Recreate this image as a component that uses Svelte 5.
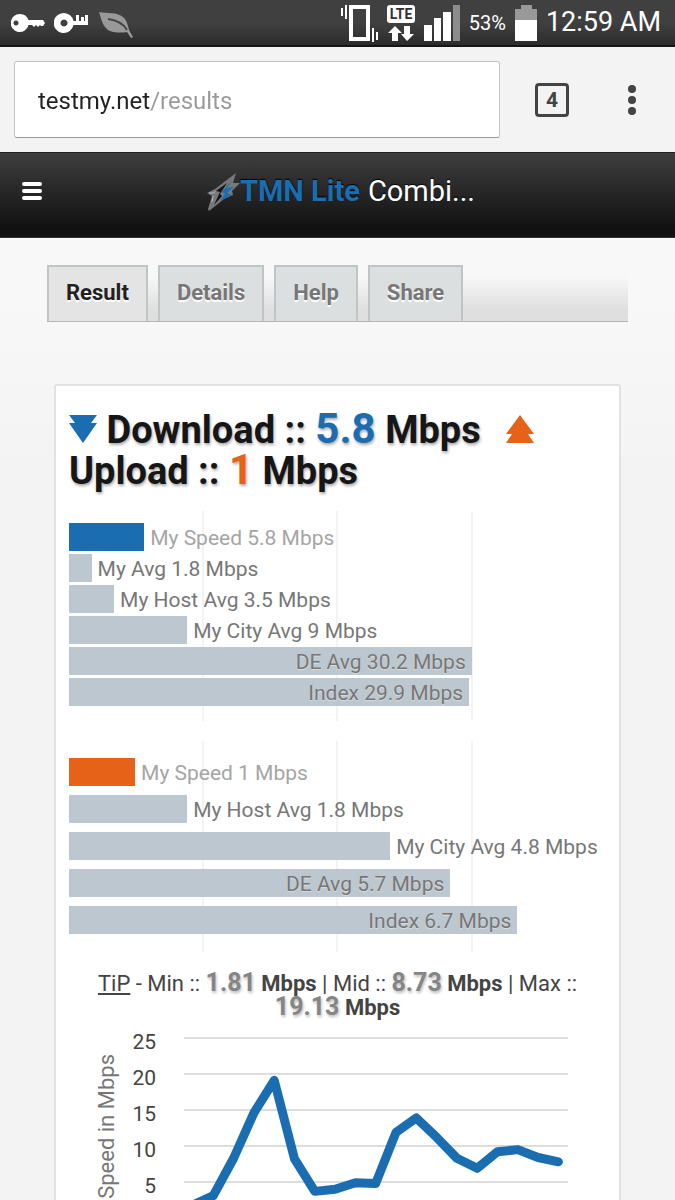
<script>
	const tabs = ["Result", "Details", "Help", "Share"];
	let activeTab = "Result";
	let url = "testmy.net/results";

	// widths are percentages of the chart area
	const download = [
		{ label: "My Speed 5.8 Mbps", width: 14, mine: true },
		{ label: "My Avg 1.8 Mbps", width: 4.2 },
		{ label: "My Host Avg 3.5 Mbps", width: 8.4 },
		{ label: "My City Avg 9 Mbps", width: 22 },
		{ label: "DE Avg 30.2 Mbps", width: 75, inside: true },
		{ label: "Index 29.9 Mbps", width: 74.5, inside: true }
	];
	const upload = [
		{ label: "My Speed 1 Mbps", width: 12.3, mine: true },
		{ label: "My Host Avg 1.8 Mbps", width: 22 },
		{ label: "My City Avg 4.8 Mbps", width: 59.8 },
		{ label: "DE Avg 5.7 Mbps", width: 71, inside: true },
		{ label: "Index 6.7 Mbps", width: 83.5, inside: true }
	];
	const charts = [
		{ name: "download", rows: download },
		{ name: "upload", rows: upload }
	];

	const samples = [
		1.81, 3.1, 8.3, 14.6, 19.13, 8.2, 3.7, 4, 4.9, 4.8, 11.9, 13.9, 11.2, 8.3, 6.9, 9.2, 9.5, 8.4,
		7.8
	];
	const ticks = [25, 20, 15, 10, 5, 0];

	function yPos(value) {
		return 194 - value * 7.2;
	}
	const points = samples.map((v, i) => `${124 + i * 20.3},${yPos(v)}`).join(" ");
</script>

<div class="screen">
	<div class="status">
		<svg width="34" height="20" viewBox="0 0 34 20">
			<path
				fill="#fff"
				fill-rule="evenodd"
				d="M9 1a9 9 0 0 1 8.500 6H32l2 3-2 3h-2l-1-1-2 2-2-2-2 2-2-2h-3.500A9 9 0 1 1 9 1zM5 7.500a2.500 2.500 0 1 0 .01 0z"
			/>
		</svg>
		<svg width="34" height="22" viewBox="0 0 34 22">
			<path
				fill="#fff"
				fill-rule="evenodd"
				d="M10 1a10 10 0 0 1 9.500 8H22V3h3v6h2V5h3v4h1V3h3v10H19.500A10 10 0 1 1 10 1zM10 7.500a3.500 3.500 0 1 0 .01 0z"
			/>
		</svg>
		<svg class="leaf" width="34" height="27" viewBox="0 0 34 27">
			<path
				fill="#999"
				d="M0 0c8 2 18-1 25 6 3 3 4 8 5 12l4 7-2 1-4-6c-8 1-17 1-21-4C3 12 2 6 0 0z"
			/>
			<path fill="none" stroke="#444" stroke-width="2" d="M9 7c8 1 15 4 19 11" />
		</svg>
		<div class="spacer"></div>
		<svg width="37" height="38" viewBox="0 0 37 38">
			<rect x="10" y="3" width="17" height="32" fill="none" stroke="#fff" stroke-width="4" />
			<path stroke="#fff" stroke-width="2" d="M1 4v8M5 1v14M32 24v14M36 28v8" />
		</svg>
		<svg width="28" height="38" viewBox="0 0 28 38">
			<rect x="0" y="1" width="28" height="18" rx="3" fill="#fff" />
			<text x="14" y="15" text-anchor="middle" class="lte">LTE</text>
			<path fill="#fff" d="M8 22l7 7h-4v8H5v-8H1zM20 37l-6-7h3v-8h6v8h4z" />
		</svg>
		<svg width="36" height="38" viewBox="0 0 36 38">
			<path fill="#fff" d="M0 21h8v16H0zM10 14h7v23h-7zM19 8h8v29h-8z" />
			<path fill="#8c8c8c" d="M29 1h7v36h-7z" />
		</svg>
		<span class="percent">53%</span>
		<svg width="22" height="38" viewBox="0 0 22 38">
			<path fill="#999" d="M6 1h11v4h5v11H0V5h6z" />
			<path fill="#fff" d="M0 16h22v21H0z" />
		</svg>
		<span class="clock">12:59 AM</span>
	</div>

	<div class="browser">
		<div class="address">
			<input type="text" aria-label="Address" bind:value={url} />
		</div>
		<button class="count" aria-label="4 open tabs">4</button>
		<button class="more" aria-label="More options">
			<svg width="10" height="30" viewBox="0 0 10 30" fill="#444">
				<circle cx="5" cy="4" r="4" />
				<circle cx="5" cy="15" r="4" />
				<circle cx="5" cy="26" r="4" />
			</svg>
		</button>
	</div>

	<header>
		<button class="menu" aria-label="Menu">
			<svg width="20" height="18" viewBox="0 0 20 18">
				<path stroke="#fff" stroke-width="4" stroke-linecap="round" d="M2 2h16M2 9h16M2 16h16" />
			</svg>
		</button>
		<a class="brand" href="/">
			<svg width="34" height="40" viewBox="0 0 34 40">
				<path fill="#77787a" d="M30 2L9 18l-4 2-4 2 5 3-4 13 1 2 15-12 9-4-1-4 8-8-7 0z" />
				<path fill="#151515" d="M21 12L10 20l4 1-6 13 8-9-2-2z" />
				<path fill="#1b6db2" d="M27 8l-6 9 7-1-7 6 5 2-12 6 5-7-3-2z" />
				<path fill="none" stroke="#b5b5b5" stroke-width="1" d="M3 22l5 0 1-2M7 25l-1 6" />
			</svg>
			<b>TMN Lite</b>
			<span>Combi...</span>
		</a>
	</header>

	<main>
		<nav>
			{#each tabs as tab}
				<button class="tab" class:active={tab === activeTab} on:click={() => (activeTab = tab)}>
					{tab}
				</button>
			{/each}
		</nav>

		<article>
			<h1>
				<svg class="arrow" width="28" height="28" viewBox="0 0 28 28">
					<path fill="#1b6db2" d="M0 0h28l-6 8h6L14 28 0 8h6z" />
				</svg>
				Download :: <span class="num blue">5.8</span> Mbps
				<svg class="arrow up" width="28" height="28" viewBox="0 0 28 28">
					<path fill="#e66219" d="M14 0l14 19h-6l6 9H0l6-9H0z" />
				</svg>
				Upload :: <span class="num orange">1</span> Mbps
			</h1>

			{#each charts as chart}
				<ul class="bars {chart.name}">
					{#each chart.rows as row}
						<li class:mine={row.mine}>
							<div class="bar" style:width="{row.width}%">
								{#if row.inside}<span>{row.label}</span>{/if}
							</div>
							{#if !row.inside}<span>{row.label}</span>{/if}
						</li>
					{/each}
				</ul>
			{/each}

			<p class="tip">
				<a href="#tip">TiP</a> - Min :: <b><em>1.81</em> Mbps</b> | Mid ::
				<b><em>8.73</em> Mbps</b> | Max :: <b><em>19.13</em> Mbps</b>
			</p>

			<svg class="line" viewBox="0 0 537 230" role="img" aria-label="Speed in Mbps">
				{#each ticks as tick}
					<path stroke="#ddd" stroke-width="2" d="M115 {yPos(tick)}h384" />
					<text x="87" y={yPos(tick) + 11} text-anchor="end" fill="#444">{tick}</text>
				{/each}
				<text class="axis" transform="translate(45 30) rotate(-90)" text-anchor="end">
					Speed in Mbps
				</text>
				<polyline {points} />
			</svg>
		</article>
	</main>
</div>

<style>
	:global(body) {
		margin: 0;
	}
	.screen {
		display: flex;
		flex-direction: column;
		height: 100vh;
		overflow: hidden;
		font-family: Roboto, "Noto Sans", sans-serif;
		color: #444;
		background: #f4f4f4;
	}
	button {
		padding: 0;
		border: 0;
		background: none;
		font: inherit;
		color: inherit;
	}
	svg {
		flex: none;
	}
	.status {
		display: flex;
		flex: none;
		align-items: center;
		gap: 9px;
		height: 45px;
		padding: 0 14px 0 11px;
		border-bottom: 2px solid #151515;
		background: linear-gradient(#404040 50%, #2c2c2c);
		color: #fff;
	}
	.leaf {
		margin: 6px 0 0 2px;
	}
	.spacer {
		flex: 1;
	}
	.lte {
		font-size: 14px;
		font-weight: 700;
		fill: #333;
	}
	.percent {
		font-size: 20px;
	}
	.clock {
		font-size: 27px;
		line-height: 45px;
	}
	.browser {
		display: flex;
		flex: none;
		align-items: center;
		height: 105px;
		padding: 0 38px 0 14px;
		background: #f3f3f3;
	}
	.address {
		flex: 1;
		box-sizing: border-box;
		height: 77px;
		padding: 0 23px;
		border: 1px solid #c4c4c4;
		border-bottom-color: #999;
		border-radius: 3px;
		background: #fff;
	}
	/* host part dark, path part grey */
	.address input {
		width: 100%;
		height: 100%;
		padding: 2px 0 0;
		border: 0;
		outline: 0;
		box-sizing: border-box;
		font: 24px Roboto, sans-serif;
		color: transparent;
		caret-color: #222;
		background: linear-gradient(90deg, #222 113px, #999 113px);
		-webkit-background-clip: text;
		background-clip: text;
	}
	.count {
		box-sizing: border-box;
		width: 34px;
		height: 34px;
		margin: 0 58px 0 35px;
		border: 3px solid #444;
		border-radius: 4px;
		font-size: 21px;
		font-weight: 700;
		line-height: 28px;
	}
	.more svg,
	.menu svg {
		display: block;
	}
	header {
		display: grid;
		flex: none;
		grid-template-columns: 1fr auto 1fr;
		align-items: center;
		box-sizing: border-box;
		height: 86px;
		padding: 0 16px 8px 22px;
		border-top: 1px solid #222;
		border-bottom: 1px solid #333;
		background: linear-gradient(#3e3e3e, #111 90%);
	}
	.menu {
		justify-self: start;
	}
	.brand {
		display: flex;
		align-items: center;
		font-size: 29px;
		color: #fff;
		text-decoration: none;
		text-shadow: 0 -1px 1px #000;
	}
	.brand b {
		margin-right: 8px;
		color: #1b6db2;
	}
	main {
		flex: 1;
		min-height: 0;
		padding: 27px 47px 0;
		overflow-y: auto;
		scrollbar-width: none;
		background: linear-gradient(#f8f8f8, #f8f8f8 60px, #f3f3f3 240px);
	}
	nav {
		display: flex;
		gap: 10px;
		border-bottom: 1px solid #b5b5b5;
		background: linear-gradient(transparent 20%, #dfdfdf 80%);
	}
	.tab {
		padding: 0 17px 3px;
		border: 2px solid #c0c4c5;
		border-bottom: 0;
		background: #dbdfe0;
		font-size: 22px;
		font-weight: 700;
		line-height: 51px;
		color: #777;
		text-shadow: 0 2px 1px #fff;
	}
	.tab.active {
		background: #e4e4e4;
		color: #222;
	}
	article {
		margin: 62px 7px 0;
		padding: 24px 13px;
		border: 2px solid #e2e2e2;
		border-radius: 3px;
		background: #fff;
	}
	h1 {
		margin: 0 0 19px;
		font-size: 38px;
		line-height: 41px;
		color: #161616;
		text-shadow: 1px 2px 3px #aaa;
	}
	.arrow.up {
		margin-left: 16px;
	}
	/* bigger digits must not push the lines apart */
	.num,
	.tip em {
		line-height: 0;
	}
	.num {
		font-size: 42px;
	}
	.blue {
		color: #1b6db2;
	}
	.orange {
		color: #e66219;
	}
	.bars {
		display: flex;
		flex-direction: column;
		gap: 3px;
		margin: 0 0 20px;
		padding: 12px 0 15px;
		list-style: none;
		background: repeating-linear-gradient(
				90deg,
				transparent 0,
				transparent calc(33% - 2px),
				#f3f3f3 calc(33% - 2px),
				#f3f3f3 33%
			)
			0 0 / 76% 100% no-repeat;
	}
	.bars.upload {
		gap: 9px;
		padding: 17px 0 18px;
	}
	li {
		display: flex;
		gap: 6px;
		font-size: 21px;
		line-height: 30px;
		height: 28px;
		color: #777;
		white-space: nowrap;
	}
	.bar {
		box-sizing: border-box;
		padding-right: 6px;
		background: #bcc7d0;
		text-align: right;
		text-shadow: 0 1px 1px #ddd;
	}
	.mine {
		color: #a5a5a5;
	}
	.mine .bar {
		background: #1b6db2;
	}
	.upload .mine .bar {
		background: #e66219;
	}
	.tip {
		margin: 0 0 4px;
		padding: 0 10px;
		font-size: 22px;
		line-height: 24px;
		text-align: center;
	}
	.tip a {
		color: inherit;
	}
	.tip em {
		font-size: 25px;
		font-style: normal;
		color: #858585;
		text-shadow: 1px 2px 3px #bbb;
	}
	.line {
		display: block;
		width: 100%;
		font-size: 21px;
	}
	.axis {
		font-size: 22px;
		fill: #777;
	}
	polyline {
		fill: none;
		stroke: #1b6db2;
		stroke-width: 9;
		stroke-linecap: round;
		stroke-linejoin: round;
	}
</style>
